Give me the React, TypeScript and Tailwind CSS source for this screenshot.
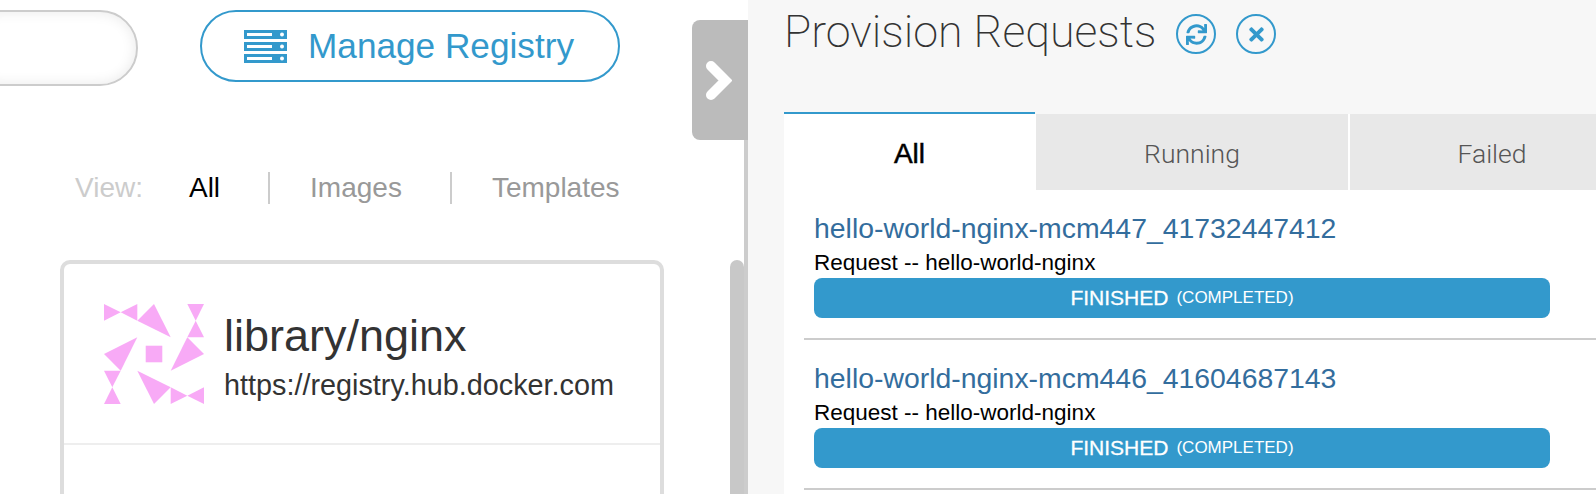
import React from 'react';
import { FaSync, FaTimes } from 'react-icons/fa';

const avatarShapes = [
  '0,0 16.7,8.3 0,16.7',
  '33.3,0 16.7,8.3 33.3,16.7',
  '50,0 66.7,33.3 33.3,16.7',
  '83.3,0 100,0 91.7,16.7',
  '91.7,16.7 100,33.3 83.3,33.3',
  '33.3,33.3 16.7,66.7 0,50',
  '41.7,41.7 58.3,41.7 58.3,58.3 41.7,58.3',
  '83.3,33.3 100,50 66.7,66.7',
  '0,66.7 16.7,66.7 8.3,83.3',
  '8.3,83.3 16.7,100 0,100',
  '33.3,66.7 66.7,83.3 50,100',
  '66.7,83.3 83.3,91.7 66.7,100',
  '100,83.3 83.3,91.7 100,100',
];

const requests = [
  { id: 'hello-world-nginx-mcm447_41732447412', name: 'hello-world-nginx' },
  { id: 'hello-world-nginx-mcm446_41604687143', name: 'hello-world-nginx' },
];

const ServerIcon = () => (
  <svg width="43" height="33" viewBox="0 0 43 33" className="shrink-0">
    {[0, 12, 24].map((y) => (
      <g key={y}>
        <rect x="0" y={y} width="43" height="9" fill="#3399cc" />
        <rect x="3" y={y + 3} width="25" height="3" fill="#fff" />
        <circle cx="38" cy={y + 4.5} r="2" fill="#fff" />
      </g>
    ))}
  </svg>
);

const RoundIcon = ({ children }: { children: React.ReactNode }) => (
  <div className="flex h-10 w-10 items-center justify-center rounded-full border-2 border-[#3399cc] text-[#3399cc]">
    {children}
  </div>
);

const RequestItem = ({ id, name }: { id: string; name: string }) => (
  <div className="ml-5 border-b-2 border-[#ccc] pt-[19px] pr-[46px] pb-5 pl-[10px]">
    <div className="text-[28.4px] leading-[39px] text-[#336d9d]">{id}</div>
    <div className="text-[22.5px] leading-[30px] text-black">Request -- {name}</div>
    <div className="flex h-10 items-center justify-center gap-2 rounded-lg bg-[#3399cc] text-white">
      <span className="text-[21px] [-webkit-text-stroke:0.3px_white]">FINISHED</span>
      <span className="text-[17px]">(COMPLETED)</span>
    </div>
  </div>
);

export default function App() {
  return (
    <div className="relative flex h-[494px] w-[1596px] overflow-hidden bg-white font-['Liberation_Sans',Arial,sans-serif]">
      <div className="w-[730px] shrink-0 pt-[10px]">
        <div className="flex items-start">
          <div className="-ml-10 h-[76px] w-[178px] rounded-[38px] border-2 border-[#ccc] bg-white shadow-[inset_0_0_14px_rgba(0,0,0,0.09)]" />
          <button className="ml-[62px] flex h-[72px] w-[420px] items-center gap-[21px] rounded-full border-2 border-[#3399cc] bg-white pl-[42px] text-[35.2px] text-[#3399cc]">
            <ServerIcon />
            <span>Manage Registry</span>
          </button>
        </div>

        <div className="mt-[86px] ml-[75px] flex h-8 items-center text-[28px]">
          <span className="mr-[46px] text-[#ccc]">View:</span>
          <span className="mr-12 text-black">All</span>
          <span className="mr-10 h-8 w-0.5 bg-[#ccc]" />
          <span className="mr-12 text-[#999]">Images</span>
          <span className="mr-10 h-8 w-0.5 bg-[#ccc]" />
          <span className="text-[#999]">Templates</span>
        </div>

        <div className="mt-14 ml-[60px] h-[300px] w-[604px] rounded-[10px] border-4 border-[#ddd]">
          <div className="flex h-[181px] gap-5 border-b-2 border-[#eee] pt-10 pl-10">
            <svg width="100" height="100" viewBox="0 0 100 100" className="shrink-0">
              {avatarShapes.map((points) => (
                <polygon key={points} points={points} fill="#f8aaf6" />
              ))}
            </svg>
            <div className="text-[#333]">
              <div className="mt-[7px] text-[45px] leading-[50px]">library/nginx</div>
              <div className="mt-[7px] text-[28.8px] leading-[34px]">https://registry.hub.docker.com</div>
            </div>
          </div>
        </div>
      </div>

      <div className="mt-[260px] w-[14px] shrink-0 rounded-t-[7px] bg-[#c8c8c8]" />
      <div className="mt-5 w-1 shrink-0 bg-[#ccc]" />

      <div className="min-w-0 flex-1 overflow-hidden bg-[#f7f7f7] pl-9">
        <div className="flex h-[112px] items-start">
          <h1 className="w-[392px] pt-[5px] font-['Roboto',sans-serif] text-[44.8px] leading-[54px] font-extralight text-[#333]">
            Provision Requests
          </h1>
          <div className="mt-[14px] flex gap-5">
            <RoundIcon>
              <FaSync size={21} />
            </RoundIcon>
            <RoundIcon>
              <FaTimes size={21} />
            </RoundIcon>
          </div>
        </div>

        <div className="flex h-[78px] w-[850px] items-end">
          <div className="flex h-[78px] w-[251px] items-center justify-center border-t-2 border-[#3399cc] bg-white pt-[3px] text-[28px] text-black [-webkit-text-stroke:0.5px_black]">
            All
          </div>
          <div className="flex h-[76px] w-[313px] items-center justify-center border-l border-white bg-[#e8e8e8] pt-[3px] font-['Roboto',sans-serif] text-[26.5px] font-light text-[#555]">
            Running
          </div>
          <div className="flex h-[76px] w-[286px] items-center justify-center border-l-2 border-white bg-[#e8e8e8] pt-[3px] font-['Roboto',sans-serif] text-[26.5px] font-light text-[#555]">
            Failed
          </div>
        </div>

        <div className="h-[304px] bg-white">
          {requests.map((r) => (
            <RequestItem key={r.id} id={r.id} name={r.name} />
          ))}
        </div>
      </div>

      {/* collapse handle sits over the scrollbar and panel edge */}
      <div className="absolute top-5 left-[692px] flex h-[120px] w-14 items-center rounded-l-lg bg-[#bbb] pl-[13px]">
        <svg width="27" height="41" viewBox="0 0 27 41">
          <path d="M6 6 L20.5 20.5 L6 35" fill="none" stroke="#fff" strokeWidth="10" strokeLinejoin="miter" strokeLinecap="round" />
        </svg>
      </div>
    </div>
  );
}
